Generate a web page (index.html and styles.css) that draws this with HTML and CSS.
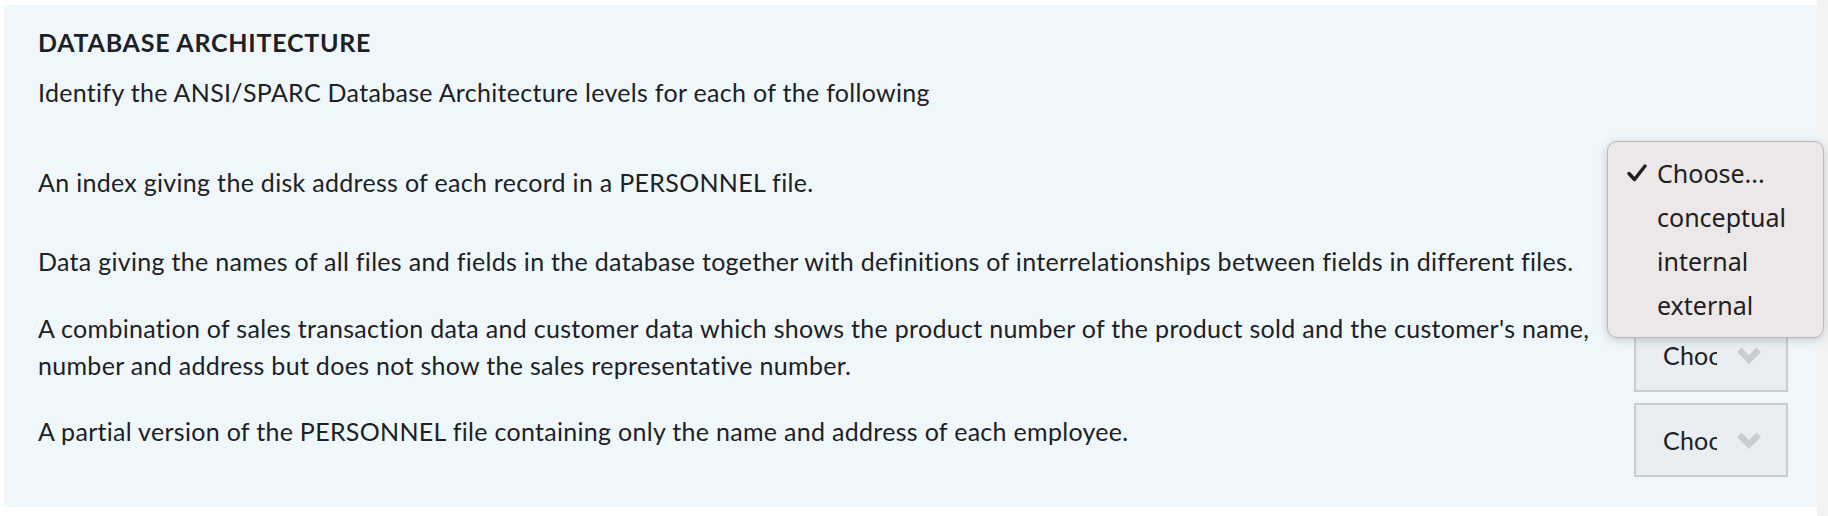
FILE: index.html
```html
<!DOCTYPE html>
<html lang="en">
<head>
<meta charset="utf-8">
<title>Database Architecture</title>
<link rel="stylesheet" href="styles.css">
</head>
<body>
<div class="page">
  <main class="main">
    <section class="panel">
      <h2 class="title">DATABASE ARCHITECTURE</h2>
      <p class="prompt">Identify the ANSI/SPARC Database Architecture levels for each of the following</p>
      <div class="rows">
        <div class="row row-first">
          <div class="row-text">An index giving the disk address of each record in a PERSONNEL file.</div>
          <div class="select-wrap">
            <div class="select"><span class="select-value">Choose...</span><svg class="chev" viewBox="0 0 26 18" width="26" height="18"><path d="M1 5 L5.5 0.5 L13 8 L20.5 0.5 L25 5 L13 17 Z" fill="#c9cdd0"/></svg></div>
            <ul class="popup">
              <li class="opt checked"><svg class="check" viewBox="0 0 20 18" width="20" height="18"><path d="M2 9.5 L7.5 15.5 L18 2" fill="none" stroke="#1e1e1e" stroke-width="3.4" stroke-linecap="round" stroke-linejoin="round"/></svg>Choose...</li>
              <li class="opt">conceptual</li>
              <li class="opt">internal</li>
              <li class="opt">external</li>
            </ul>
          </div>
        </div>
        <div class="row">
          <div class="row-text">Data giving the names of all files and fields in the database together with definitions of interrelationships between fields in different files.</div>
          <div class="select-wrap">
            <div class="select"><span class="select-value">Choose...</span><svg class="chev" viewBox="0 0 26 18" width="26" height="18"><path d="M1 5 L5.5 0.5 L13 8 L20.5 0.5 L25 5 L13 17 Z" fill="#c9cdd0"/></svg></div>
          </div>
        </div>
        <div class="row">
          <div class="row-text">A combination of sales transaction data and customer data which shows the product number of the product sold and the customer's name, number and address but does not show the sales representative number.</div>
          <div class="select-wrap">
            <div class="select"><span class="select-value">Choose...</span><svg class="chev" viewBox="0 0 26 18" width="26" height="18"><path d="M1 5 L5.5 0.5 L13 8 L20.5 0.5 L25 5 L13 17 Z" fill="#c9cdd0"/></svg></div>
          </div>
        </div>
        <div class="row">
          <div class="row-text">A partial version of the PERSONNEL file containing only the name and address of each employee.</div>
          <div class="select-wrap">
            <div class="select"><span class="select-value">Choose...</span><svg class="chev" viewBox="0 0 26 18" width="26" height="18"><path d="M1 5 L5.5 0.5 L13 8 L20.5 0.5 L25 5 L13 17 Z" fill="#c9cdd0"/></svg></div>
          </div>
        </div>
      </div>
    </section>
  </main>
  <div class="scrollbar"></div>
</div>
</body>
</html>
```
FILE: styles.css
```css
html, body {
  margin: 0;
  padding: 0;
  background: #ffffff;
}
body {
  font-family: Lato, "Noto Sans", sans-serif;
  color: #1d2125;
}
.page {
  display: flex;
  width: 1828px;
  height: 516px;
  overflow: hidden;
}
.main {
  flex: 1;
  padding: 5px 0 0 4px;
}
.scrollbar {
  width: 11px;
  background: #f3f3f3;
}
.panel {
  background: #eff7fa;
  height: 502px;
  box-sizing: border-box;
  padding: 22px 29px 0 34px;
}
.title {
  margin: 0;
  font-size: 25px;
  font-weight: 700;
  line-height: 30px;
  letter-spacing: 0.75px;
}
.prompt {
  margin: 17px 0 0 0;
  font-size: 25px;
  line-height: 37px;
  letter-spacing: 0.3px;
}
.rows {
  margin-top: 23px;
  display: flex;
  flex-direction: column;
}
.row {
  display: flex;
  align-items: center;
  gap: 20px;
  font-size: 25px;
  line-height: 37px;
  letter-spacing: 0.3px;
}
.row-text {
  flex: 1;
}
.row-first .row-text {
  padding-top: 12px;
}
.select-wrap {
  position: relative;
  margin-top: 14px;
  margin-bottom: -3px;
}
.select {
  width: 154px;
  height: 74px;
  box-sizing: border-box;
  border: 2px solid #c9cdd0;
  background: #e8eef1;
  display: flex;
  align-items: center;
  padding-left: 27px;
  padding-right: 24px;
}
.select-value {
  width: 54px;
  overflow: hidden;
  white-space: nowrap;
  font-size: 25px;
  line-height: 30px;
  letter-spacing: 0.2px;
}
.chev {
  margin-left: auto;
  display: block;
  margin-top: 2px;
}
.popup {
  position: absolute;
  left: -27px;
  top: -7px;
  width: 217px;
  height: 197px;
  box-sizing: border-box;
  margin: 0;
  padding: 9px 0 0 0;
  list-style: none;
  background: #ece7e8;
  border: 1px solid #bdb9ba;
  border-radius: 10px;
  box-shadow: 0 2px 10px rgba(0, 0, 0, 0.18);
  font-family: "Noto Sans", "Open Sans", sans-serif;
  font-size: 25px;
  letter-spacing: 0;
  color: #202020;
  z-index: 5;
}
.opt {
  height: 44px;
  line-height: 44px;
  padding-left: 49px;
  position: relative;
}
.check {
  position: absolute;
  left: 19px;
  top: 13px;
  display: block;
}
```
